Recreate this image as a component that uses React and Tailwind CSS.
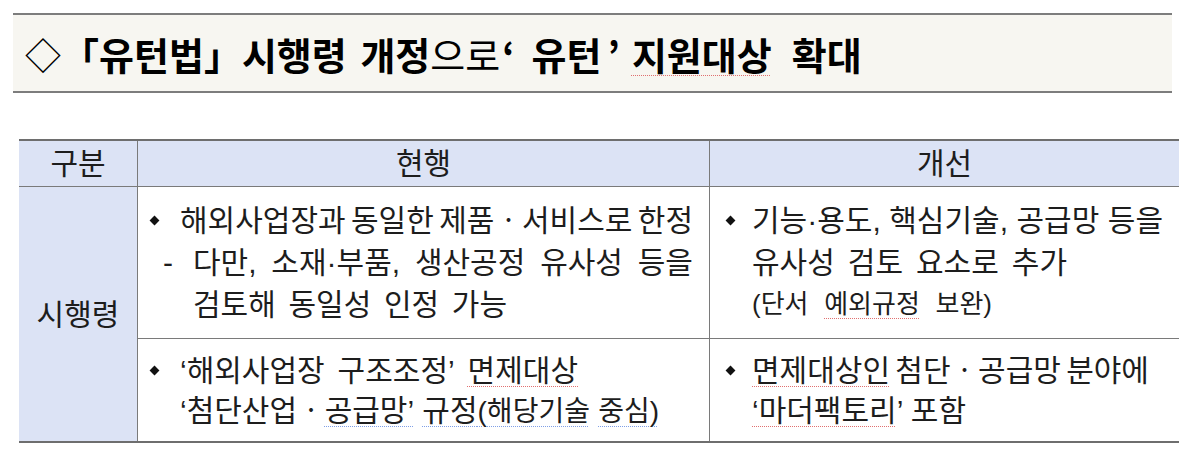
export default function App() {
  const red = "underline decoration-dotted decoration-[#e07070] decoration-1 underline-offset-[5px]";
  const blue = "underline decoration-dotted decoration-[#7f9fe6] decoration-1 underline-offset-[5px]";
  const bullet = <span className="block h-[7px] w-[7px] rotate-45 bg-[#111]" />;

  return (
    <div className="h-[465px] w-[1200px] overflow-hidden bg-white pt-[13px] text-[#1d1d1d]">
      {/* title */}
      <div className="ml-[13px] flex h-[80px] w-[1159px] items-center border-y-2 border-[#7d7d7d] bg-[#f7f6f1] pl-[12px] font-['Noto_Sans_CJK_KR',sans-serif] text-[38px] text-black">
        <p className="whitespace-pre [word-spacing:5px]">
          <span className="text-[36px]">◇</span>
          <span className="font-bold">「유턴법」시행령 개정</span>
          <span>으로</span>
          <span className="font-bold">
            <span className="ml-[2px] mr-[17px]">‘</span>유턴<span className="ml-[6px] mr-[12px]">’</span>
            <span className={red}>지원대상</span>
            <span className="ml-[20px]">확대</span>
          </span>
        </p>
      </div>

      {/* table */}
      <div className="ml-[19px] mt-[46px] grid w-[1160px] grid-cols-[119px_572px_469px] grid-rows-[46px_152px_102px] border-y-2 border-[#6e6e6e] font-['Liberation_Sans','Noto_Sans_CJK_KR',sans-serif] text-[30px]">
        <div className="flex items-center justify-center border-b border-r border-[#7a7a7a] bg-[#dce3f5]">구분</div>
        <div className="flex items-center justify-center border-b border-r border-[#7a7a7a] bg-[#dce3f5]">현행</div>
        <div className="flex items-center justify-center border-b border-[#7a7a7a] bg-[#dce3f5]">개선</div>

        <div className="row-span-2 flex items-center justify-center border-r border-[#7a7a7a] bg-[#dce3f5]">시행령</div>

        <div className="flex flex-col justify-center border-b border-r border-[#7a7a7a] pl-[10px]">
          <div className="flex h-[42px] items-center">
            <span className="w-[32px] pl-[3px]">{bullet}</span>
            <div className="flex w-[513px] justify-between">
              <span>해외사업장과</span>
              <span>동일한</span>
              <span>제품ㆍ서비스로</span>
              <span>한정</span>
            </div>
          </div>
          <div className="flex h-[42px] items-center">
            <span className="w-[45px] pl-[15px]">-</span>
            <div className="flex w-[500px] justify-between">
              <span>다만,</span>
              <span>소재·부품,</span>
              <span>생산공정</span>
              <span>유사성</span>
              <span>등을</span>
            </div>
          </div>
          <div className="flex h-[42px] items-center pl-[45px]">
            <div className="flex w-[314px] justify-between">
              <span>검토해</span>
              <span>동일성</span>
              <span>인정</span>
              <span>가능</span>
            </div>
          </div>
        </div>

        <div className="flex flex-col justify-center border-b border-[#7a7a7a] pl-[10px]">
          <div className="flex h-[42px] items-center">
            <span className="w-[32px] pl-[7px]">{bullet}</span>
            <div className="flex w-[411px] justify-between">
              <span>기능·용도,</span>
              <span>핵심기술,</span>
              <span>공급망</span>
              <span>등을</span>
            </div>
          </div>
          <div className="flex h-[42px] items-center pl-[32px]">
            <div className="flex w-[315px] justify-between">
              <span>유사성</span>
              <span>검토</span>
              <span>요소로</span>
              <span>추가</span>
            </div>
          </div>
          <div className="flex h-[42px] items-center pl-[32px] text-[26px]">
            <div className="flex w-[240px] justify-between">
              <span>(단서</span>
              <span className={red}>예외규정</span>
              <span>보완)</span>
            </div>
          </div>
        </div>

        <div className="flex flex-col justify-center border-r border-[#7a7a7a] pl-[10px]">
          <div className="flex h-[40px] items-center">
            <span className="w-[32px] pl-[3px]">{bullet}</span>
            <div className="flex w-[398px] justify-between">
              <span>‘해외사업장</span>
              <span>구조조정’</span>
              <span className={red}>면제대상</span>
            </div>
          </div>
          <div className="flex h-[40px] items-center pl-[32px]">
            <div className="flex w-[479px] items-baseline justify-between">
              <span>
                ‘첨단산업ㆍ<span className={blue}>공급망’</span>
              </span>
              <span className={blue}>
                규정<span className="text-[28px]">(해당기술</span>
              </span>
              <span className={`${blue} text-[28px]`}>중심)</span>
            </div>
          </div>
        </div>

        <div className="flex flex-col justify-center pl-[10px]">
          <div className="flex h-[40px] items-center">
            <span className="w-[32px] pl-[7px]">{bullet}</span>
            <div className="flex w-[397px] justify-between">
              <span className={red}>면제대상인</span>
              <span>첨단ㆍ공급망</span>
              <span>분야에</span>
            </div>
          </div>
          <div className="flex h-[40px] items-center pl-[32px]">
            <div className="flex w-[214px] justify-between">
              <span>
                <span className={red}>‘마더팩토리</span>’
              </span>
              <span>포함</span>
            </div>
          </div>
        </div>
      </div>
    </div>
  );
}
